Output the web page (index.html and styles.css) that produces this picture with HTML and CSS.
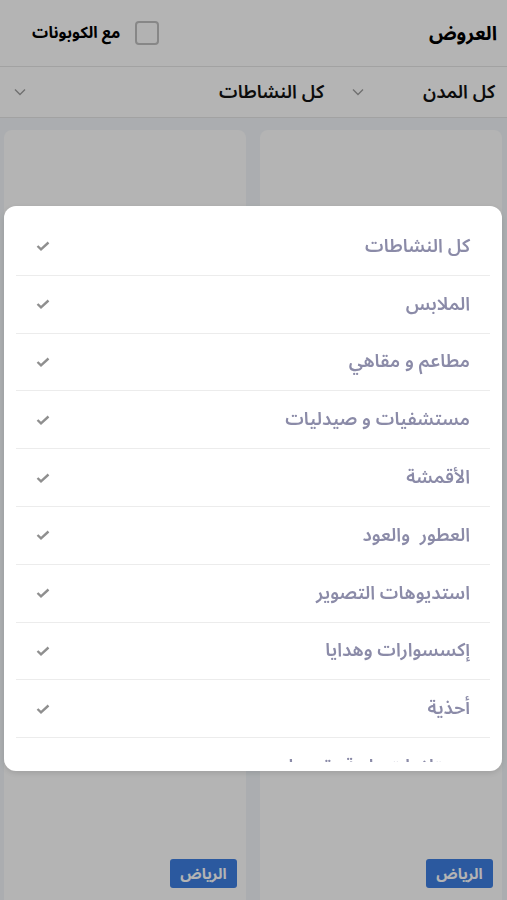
FILE: index.html
```html
<!DOCTYPE html>
<html lang="ar" dir="rtl">
<head>
<meta charset="utf-8">
<title>العروض</title>
<link rel="stylesheet" href="styles.css">
</head>
<body>
<div class="page">
  <header class="topbar">
    <h1 class="title">العروض</h1>
    <label class="coupons">
      <span class="box"></span>
      <span class="coupons-label">مع الكوبونات</span>
    </label>
  </header>
  <div class="filters">
    <div class="select select-city">
      <span>كل المدن</span>
      <svg class="chev" width="12" height="8" viewBox="0 0 12 8"><path d="M1 1.5 L6 6.5 L11 1.5" fill="none" stroke="#a0a0a0" stroke-width="1.4"/></svg>
    </div>
    <div class="select select-act">
      <span>كل النشاطات</span>
      <svg class="chev" width="12" height="8" viewBox="0 0 12 8"><path d="M1 1.5 L6 6.5 L11 1.5" fill="none" stroke="#a0a0a0" stroke-width="1.4"/></svg>
    </div>
  </div>
  <main class="grid">
    <article class="card"><div class="card-img"></div><div class="card-foot"><span class="badge">الرياض</span></div></article>
    <article class="card"><div class="card-img"></div><div class="card-foot"><span class="badge">الرياض</span></div></article>
  </main>
</div>
<div class="overlay"></div>
<div class="modal">
  <ul class="list">
    <li class="item"><span>كل النشاطات</span><svg class="check" width="14" height="10" viewBox="0 0 14 10"><path d="M1.5 5 L5 8.3 L12.5 1.5" fill="none" stroke="#8f8f8f" stroke-width="2.4"/></svg></li>
    <li class="item"><span>الملابس</span><svg class="check" width="14" height="10" viewBox="0 0 14 10"><path d="M1.5 5 L5 8.3 L12.5 1.5" fill="none" stroke="#8f8f8f" stroke-width="2.4"/></svg></li>
    <li class="item"><span>مطاعم و مقاهي</span><svg class="check" width="14" height="10" viewBox="0 0 14 10"><path d="M1.5 5 L5 8.3 L12.5 1.5" fill="none" stroke="#8f8f8f" stroke-width="2.4"/></svg></li>
    <li class="item"><span>مستشفيات و صيدليات</span><svg class="check" width="14" height="10" viewBox="0 0 14 10"><path d="M1.5 5 L5 8.3 L12.5 1.5" fill="none" stroke="#8f8f8f" stroke-width="2.4"/></svg></li>
    <li class="item"><span>الأقمشة</span><svg class="check" width="14" height="10" viewBox="0 0 14 10"><path d="M1.5 5 L5 8.3 L12.5 1.5" fill="none" stroke="#8f8f8f" stroke-width="2.4"/></svg></li>
    <li class="item"><span>العطور&nbsp; والعود</span><svg class="check" width="14" height="10" viewBox="0 0 14 10"><path d="M1.5 5 L5 8.3 L12.5 1.5" fill="none" stroke="#8f8f8f" stroke-width="2.4"/></svg></li>
    <li class="item"><span>استديوهات التصوير</span><svg class="check" width="14" height="10" viewBox="0 0 14 10"><path d="M1.5 5 L5 8.3 L12.5 1.5" fill="none" stroke="#8f8f8f" stroke-width="2.4"/></svg></li>
    <li class="item"><span>إكسسوارات وهدايا</span><svg class="check" width="14" height="10" viewBox="0 0 14 10"><path d="M1.5 5 L5 8.3 L12.5 1.5" fill="none" stroke="#8f8f8f" stroke-width="2.4"/></svg></li>
    <li class="item"><span>أحذية</span><svg class="check" width="14" height="10" viewBox="0 0 14 10"><path d="M1.5 5 L5 8.3 L12.5 1.5" fill="none" stroke="#8f8f8f" stroke-width="2.4"/></svg></li>
    <li class="item"><span>مستلزمات طبية وتجميل</span><svg class="check" width="14" height="10" viewBox="0 0 14 10"><path d="M1.5 5 L5 8.3 L12.5 1.5" fill="none" stroke="#8f8f8f" stroke-width="2.4"/></svg></li>
  </ul>
</div>
</body>
</html>
```

FILE: styles.css
```css
* { box-sizing: border-box; }
html, body { margin: 0; padding: 0; }
body {
  width: 507px;
  height: 900px;
  overflow: hidden;
  background: #f2f6fa;
  font-family: "Noto Sans Arabic", "Noto Kufi Arabic", "DejaVu Sans", sans-serif;
  color: #000;
}
.page { display: flex; flex-direction: column; }
.topbar {
  height: 67px;
  background: #fff;
  border-bottom: 1px solid #e6e6e6;
  display: flex;
  align-items: center;
  justify-content: space-between;
  padding: 0 10px 0 32px;
}
.title { margin: 0; font-size: 19.5px; font-weight: 700; }
.coupons { display: flex; align-items: center; gap: 15px; }
.box {
  width: 24px; height: 24px;
  border: 2px solid #c0c0c0;
  border-radius: 4px;
  background: #fcfcfc;
}
.coupons-label { font-size: 16px; font-weight: 700; }
.filters {
  height: 51px;
  background: #fff;
  border-bottom: 1px solid #e6e6e6;
  display: flex;
  align-items: center;
  gap: 28px;
  padding: 0 12px 0 14px;
}
.select {
  display: flex;
  align-items: center;
  justify-content: space-between;
  font-size: 18.5px;
  font-weight: 600;
  color: #111;
}
.select-city { width: 143px; }
.select-act { flex: 1; }
.chev { display: block; }
.grid {
  display: grid;
  grid-template-columns: 1fr 1fr;
  gap: 14px;
  padding: 12px 5px 0 4px;
}
.card {
  background: #fff;
  border-radius: 8px;
  height: 800px;
  display: flex;
  flex-direction: column;
  padding: 0 9px 0 8px;
}
.card-img { height: 729px; }
.card-foot { display: flex; }
.badge {
  background: #3e7ee2;
  color: #fff;
  font-size: 15px;
  font-weight: 700;
  border-radius: 3px;
  width: 67px;
  height: 29px;
  display: flex;
  align-items: center;
  justify-content: center;
}
.overlay {
  position: fixed;
  inset: 0;
  background: rgba(0, 0, 0, 0.295);
}
.modal {
  position: fixed;
  top: 206px;
  left: 4px;
  width: 498px;
  height: 565px;
  background: #fff;
  border-radius: 12px;
  padding: 12px 12px 9px;
  box-shadow: 0 2px 6px rgba(0,0,0,0.12);
  display: flex;
  flex-direction: column;
}
.list {
  list-style: none;
  margin: 0;
  padding: 0;
  flex: 1;
  overflow: hidden;
}
.item {
  height: 57.8px;
  border-bottom: 1px solid #ececec;
  display: flex;
  align-items: center;
  justify-content: space-between;
  padding: 0 20px;
  font-size: 18.5px;
  font-weight: 600;
  color: #8b8ba8;
}
.check { display: block; }
```
